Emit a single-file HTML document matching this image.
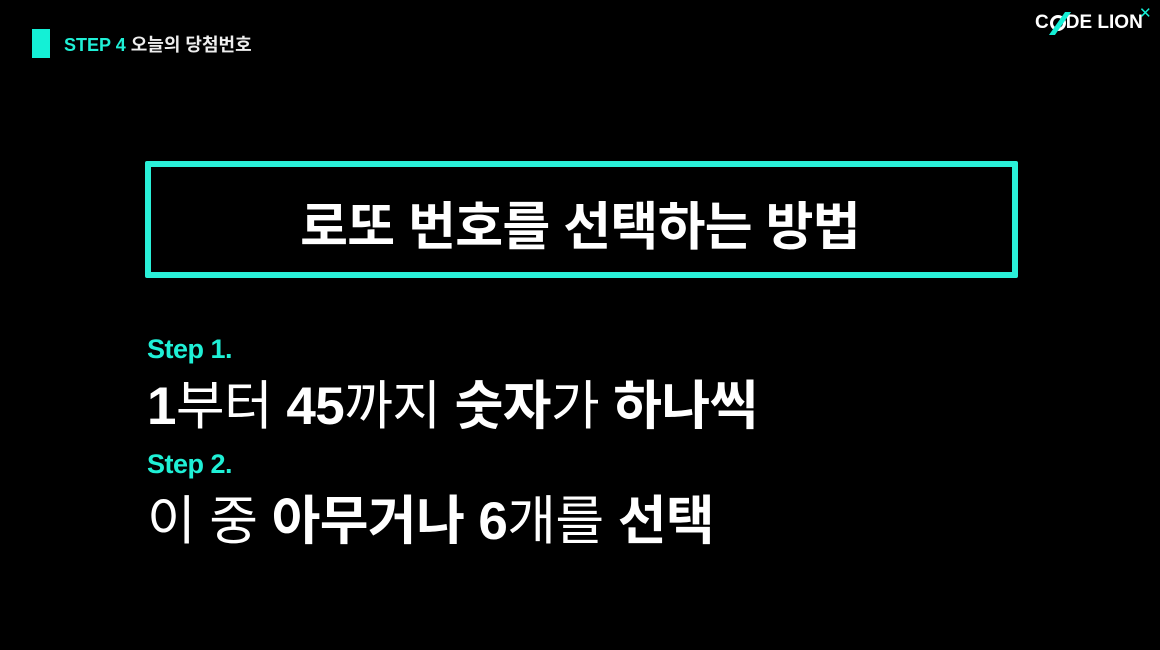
<!DOCTYPE html>
<html><head><meta charset="utf-8"><style>
body{margin:0;width:1160px;height:650px;background:#000;overflow:hidden;position:relative;font-family:"Liberation Sans","Noto Sans CJK KR",sans-serif;color:#fff}
.a{position:absolute;white-space:nowrap}
.c{color:#1ff0d6}
b{font-weight:700}
.r{font-weight:400}
</style></head><body>
<div class="a" style="left:32px;top:29px;width:18px;height:29px;background:#14f0d6"></div>
<div class="a" style="left:64px;top:31px;font-size:18px;font-weight:700;letter-spacing:0px"><span class="c">STEP 4</span> <span style="color:#eee">오늘의 당첨번호</span></div>
<div class="a" style="left:1035px;top:12px;font-size:19px;font-weight:900;letter-spacing:0px">C<span style="display:inline-block;width:17px"></span>DE LION</div>
<div class="a" style="left:1050px;top:15px;width:16px;height:16px;border:3px solid #fff;border-radius:50%;box-sizing:border-box"></div>
<div class="a" style="left:1057px;top:12px;width:6px;height:23px;background:#14f0d6;transform:skewX(-35deg)"></div>
<div class="a" style="left:1139px;top:4px;font-size:15px;color:#14f0d6">✕</div>
<div class="a" style="left:145px;top:161px;width:861px;height:105px;border:6px solid #2af0d8;border-radius:2px"></div>
<div class="a" style="left:0;width:1160px;text-align:center;top:185px;font-size:52px;font-weight:700;letter-spacing:-0.7px">로또 번호를 선택하는 방법</div>
<div class="a c" style="left:147px;top:334px;font-size:27px;font-weight:700;letter-spacing:-0.5px">Step 1.</div>
<div class="a" style="left:147px;top:364px;font-size:53px;letter-spacing:-0.6px"><b>1</b><span class="r">부터</span> <b>45</b><span class="r">까지</span> <b>숫자</b><span class="r">가</span> <b>하나씩</b></div>
<div class="a c" style="left:147px;top:449px;font-size:27px;font-weight:700;letter-spacing:-0.5px">Step 2.</div>
<div class="a" style="left:147px;top:479px;font-size:53px;letter-spacing:-0.6px"><span class="r">이 중</span> <b>아무거나 6</b><span class="r">개</span><span class="r">를</span> <b>선택</b></div>
</body></html>
